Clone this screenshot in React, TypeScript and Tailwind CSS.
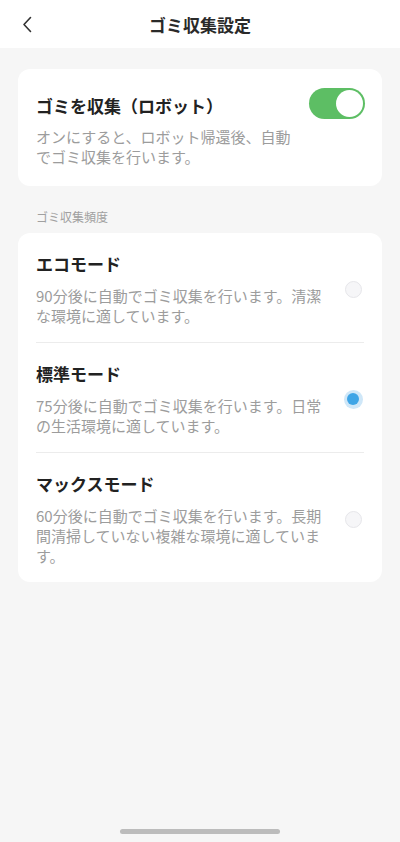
import { useState } from 'react';

const modes = [
  { id: 'eco', name: 'エコモード', desc: '90分後に自動でゴミ収集を行います。清潔な環境に適しています。' },
  { id: 'std', name: '標準モード', desc: '75分後に自動でゴミ収集を行います。日常の生活環境に適しています。' },
  { id: 'max', name: 'マックスモード', desc: '60分後に自動でゴミ収集を行います。長期間清掃していない複雑な環境に適しています。' },
];

const font = { fontFamily: '"Noto Sans CJK JP", "Noto Sans", sans-serif' };

export default function App() {
  const [on, setOn] = useState(true);
  const [mode, setMode] = useState('std');

  return (
    <div className="relative w-[400px] h-[842px] bg-[#f6f6f6] text-[#222]" style={font}>
      <header className="relative h-[48px] bg-white flex items-center justify-center">
        <button className="absolute left-[20px] top-[14px] w-[14px] h-[20px] flex items-center justify-center">
          <svg width="10" height="17" viewBox="0 0 10 17" fill="none">
            <path d="M8.5 1.5 L2 8.5 L8.5 15.5" stroke="#333" strokeWidth="1.6" strokeLinecap="round" strokeLinejoin="round" />
          </svg>
        </button>
        <h1 className="text-[17px] font-bold text-[#2a2a2a] mt-[2px]">ゴミ収集設定</h1>
      </header>

      <main className="px-[18px] pt-[21px]">
        <section className="bg-white rounded-[12px] pl-[18px] pr-[17px] pt-[19px] pb-[19px] flex items-start justify-between">
          <div className="w-[258px] pt-[6px]">
            <h2 className="text-[17px] font-bold leading-[24px]">ゴミを収集（ロボット）</h2>
            <p className="text-[15px] text-[#9c9c9c] leading-[20px] mt-[9px]">オンにすると、ロボット帰還後、自動でゴミ収集を行います。</p>
          </div>
          <button
            onClick={() => setOn(!on)}
            className={`w-[56px] h-[31px] rounded-full flex items-center px-[2px] ${on ? 'bg-[#5dbe64] justify-end' : 'bg-[#ddd] justify-start'}`}
          >
            <span className="w-[27px] h-[27px] rounded-full bg-white" />
          </button>
        </section>

        <div className="text-[12px] text-[#a0a0a0] pl-[18px] pt-[22px] pb-[8px] leading-[17px]">ゴミ収集頻度</div>

        <section className="bg-white rounded-[12px] px-[18px]">
          {modes.map((m, i) => (
            <div
              key={m.id}
              onClick={() => setMode(m.id)}
              className={`flex items-center justify-between pt-[19px] ${i < modes.length - 1 ? 'pb-[16px] border-b border-[#ececec]' : 'pb-[16px]'}`}
            >
              <div className="w-[288px]">
                <h3 className="text-[17px] font-bold leading-[24px]">{m.name}</h3>
                <p className="text-[15px] text-[#9c9c9c] leading-[20px] mt-[10px]">{m.desc}</p>
              </div>
              <div className="w-[22px] h-[22px] flex items-center justify-center">
                {mode === m.id ? (
                  <span className="w-[19px] h-[19px] rounded-full bg-[#cfe7f8] flex items-center justify-center">
                    <span className="w-[12px] h-[12px] rounded-full bg-[#3fa5e6]" />
                  </span>
                ) : (
                  <span className="w-[17px] h-[17px] rounded-full bg-[#f6f6f8] border border-[#e6e6ea]" />
                )}
              </div>
            </div>
          ))}
        </section>
      </main>

      <div className="absolute bottom-[8px] left-[120px] w-[160px] h-[5px] rounded-full bg-[#bcbcbc]" />
    </div>
  );
}
